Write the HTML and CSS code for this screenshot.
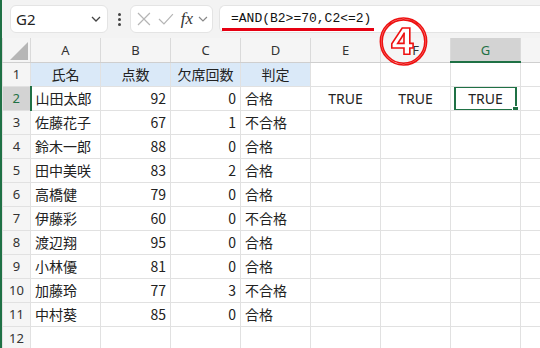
FILE: index.html
```html
<!DOCTYPE html>
<html lang="ja">
<head>
  <meta charset="UTF-8">
  <meta name="viewport" content="width=device-width, initial-scale=1.0">
  <title>AND関数</title>
  <link rel="stylesheet" href="styles.css">
</head>
<body>
  <div class="window">
    <!-- Formula bar -->
    <div class="toolbar">
      <div class="name-box">
        <span>G2</span>
        <svg class="chev" width="10" height="6" viewBox="0 0 10 6"><path d="M1 1l4 4 4-4" fill="none" stroke="#444" stroke-width="1.3"/></svg>
      </div>
      <div class="dots"><i></i><i></i><i></i></div>
      <div class="func-box">
        <svg width="16" height="16" viewBox="0 0 16 16"><path d="M2 2l12 12M14 2L2 14" stroke="#b5b5b5" stroke-width="1.2"/></svg>
        <svg width="18" height="16" viewBox="0 0 18 16"><path d="M2 8l5 5L16 3" fill="none" stroke="#b5b5b5" stroke-width="1.2"/></svg>
        <span class="fx">fx</span>
        <svg width="10" height="6" viewBox="0 0 10 6"><path d="M1 1l4 4 4-4" fill="none" stroke="#888" stroke-width="1.2"/></svg>
      </div>
      <div class="formula-box">
        <span class="formula">=AND(B2&gt;=70,C2&lt;=2)</span>
      </div>
    </div>

    <span class="step">④</span>

    <!-- Sheet -->
    <table class="sheet">
      <colgroup>
        <col class="c-row">
        <col class="c"><col class="c"><col class="c"><col class="c">
        <col class="c"><col class="c"><col class="c"><col>
      </colgroup>
      <tr class="col-head">
        <th class="corner"><span class="tri"></span></th>
        <th>A</th><th>B</th><th>C</th><th>D</th><th>E</th><th>F</th><th class="sel">G</th><th></th>
      </tr>
      <tr>
        <th class="row-head">1</th>
        <td class="title">氏名</td><td class="title">点数</td><td class="title">欠席回数</td><td class="title">判定</td>
        <td></td><td></td><td></td><td></td>
      </tr>
      <tr>
        <th class="row-head sel">2</th>
        <td>山田太郎</td><td class="num">92</td><td class="num">0</td><td>合格</td>
        <td class="mid">TRUE</td><td class="mid">TRUE</td><td class="mid active"><div class="cursor">TRUE<span class="handle"></span></div></td><td></td>
      </tr>
      <tr>
        <th class="row-head">3</th>
        <td>佐藤花子</td><td class="num">67</td><td class="num">1</td><td>不合格</td>
        <td></td><td></td><td></td><td></td>
      </tr>
      <tr>
        <th class="row-head">4</th>
        <td>鈴木一郎</td><td class="num">88</td><td class="num">0</td><td>合格</td>
        <td></td><td></td><td></td><td></td>
      </tr>
      <tr>
        <th class="row-head">5</th>
        <td>田中美咲</td><td class="num">83</td><td class="num">2</td><td>合格</td>
        <td></td><td></td><td></td><td></td>
      </tr>
      <tr>
        <th class="row-head">6</th>
        <td>高橋健</td><td class="num">79</td><td class="num">0</td><td>合格</td>
        <td></td><td></td><td></td><td></td>
      </tr>
      <tr>
        <th class="row-head">7</th>
        <td>伊藤彩</td><td class="num">60</td><td class="num">0</td><td>不合格</td>
        <td></td><td></td><td></td><td></td>
      </tr>
      <tr>
        <th class="row-head">8</th>
        <td>渡辺翔</td><td class="num">95</td><td class="num">0</td><td>合格</td>
        <td></td><td></td><td></td><td></td>
      </tr>
      <tr>
        <th class="row-head">9</th>
        <td>小林優</td><td class="num">81</td><td class="num">0</td><td>合格</td>
        <td></td><td></td><td></td><td></td>
      </tr>
      <tr>
        <th class="row-head">10</th>
        <td>加藤玲</td><td class="num">77</td><td class="num">3</td><td>不合格</td>
        <td></td><td></td><td></td><td></td>
      </tr>
      <tr>
        <th class="row-head">11</th>
        <td>中村葵</td><td class="num">85</td><td class="num">0</td><td>合格</td>
        <td></td><td></td><td></td><td></td>
      </tr>
      <tr>
        <th class="row-head">12</th>
        <td></td><td></td><td></td><td></td>
        <td></td><td></td><td></td><td></td>
      </tr>
    </table>
  </div>
</body>
</html>
```

FILE: styles.css
```css
body {
  margin: 0;
  padding: 0;
  background: #fff;
  font-family: "Noto Sans CJK JP", "Noto Sans", sans-serif;
  overflow: hidden;
}

.window {
  position: relative;
  width: 538px;
  height: 348px;
  border-left: 2px solid #1f7145;
  overflow: hidden;
}

/* Formula bar */
.toolbar {
  display: flex;
  align-items: center;
  height: 38px;
  padding: 0 0 0 8px;
  background: #f3f3f3;
  box-sizing: border-box;
}

.name-box, .func-box, .formula-box {
  height: 28px;
  background: #fff;
  border: 1px solid #e4e4e4;
  border-radius: 6px;
  box-sizing: border-box;
  display: flex;
  align-items: center;
}

.name-box {
  width: 98px;
  padding: 0 6px 0 5px;
  justify-content: space-between;
  font-family: "Noto Sans", sans-serif;
  font-size: 15px;
  color: #222;
}

.dots {
  width: 22px;
  display: flex;
  flex-direction: column;
  align-items: center;
  gap: 2px;
}

.dots i {
  width: 3px;
  height: 3px;
  border-radius: 50%;
  background: #444;
}

.func-box {
  width: 83px;
  padding: 0 4px 0 5px;
  gap: 5px;
}

.fx {
  font-family: "Liberation Serif", serif;
  font-style: italic;
  font-size: 17px;
  color: #333;
  margin-left: 1px;
}

.formula-box {
  flex: 1;
  margin-left: 6px;
  padding-left: 11px;
  border-right: none;
  border-radius: 6px 0 0 6px;
}

.formula {
  position: relative;
  font-family: "Liberation Mono", monospace;
  font-size: 13px;
  color: #111;
  margin-top: -2px;
}

.formula::after {
  content: "";
  position: absolute;
  left: -9px;
  right: -3px;
  bottom: -5px;
  height: 3px;
  background: #e60012;
}

.step {
  position: absolute;
  left: 377px;
  top: 14px;
  font-size: 49px;
  font-weight: 700;
  line-height: 1;
  color: #fff;
  -webkit-text-stroke: 1.6px #ee1111;
  z-index: 2;
}

/* Sheet */
.sheet {
  border-collapse: collapse;
  table-layout: fixed;
  width: 560px;
  font-size: 14px;
  color: #222;
}

.c-row {
  width: 28px;
}

.c {
  width: 70px;
}

.sheet tr {
  height: 24px;
}

.sheet th, .sheet td {
  border: 1px solid #e1e1e1;
  padding: 0 4px;
  white-space: nowrap;
  overflow: hidden;
  font-weight: normal;
}

.col-head th {
  background: #f5f5f5;
  border-color: #dadada;
  border-top: none;
  border-bottom-color: #cfcfcf;
  font-family: "Noto Sans", sans-serif;
  font-size: 13px;
  color: #333;
  text-align: center;
}

.col-head th.sel {
  background: #d3d3d3;
  color: #1f7145;
  border-bottom: 2px solid #1f7145;
}

.corner {
  position: relative;
  padding: 0;
}

.tri {
  position: absolute;
  right: 2px;
  bottom: 2px;
  width: 0;
  height: 0;
  border-left: 18px solid transparent;
  border-bottom: 18px solid #b6b6b6;
}

.row-head {
  background: #f5f5f5;
  border-color: #dadada;
  border-left: none;
  font-family: "Noto Sans", sans-serif;
  font-size: 13px;
  color: #333;
  text-align: center;
  padding: 0;
}

.row-head.sel {
  background: #d3d3d3;
  color: #1f7145;
  border-right: 2px solid #1f7145;
}

.title {
  background: #dae9f8;
  font-weight: bold;
  text-align: center;
}

.num {
  text-align: right;
}

.mid {
  text-align: center;
  font-family: "Noto Sans", sans-serif;
}

.active {
  padding: 0;
}

.cursor {
  position: relative;
  height: 21px;
  line-height: 21px;
  border: 2px solid #1f7145;
  margin: -1px;
}

.handle {
  position: absolute;
  right: -4px;
  bottom: -4px;
  width: 5px;
  height: 5px;
  background: #1f7145;
  border: 1px solid #fff;
}
```
